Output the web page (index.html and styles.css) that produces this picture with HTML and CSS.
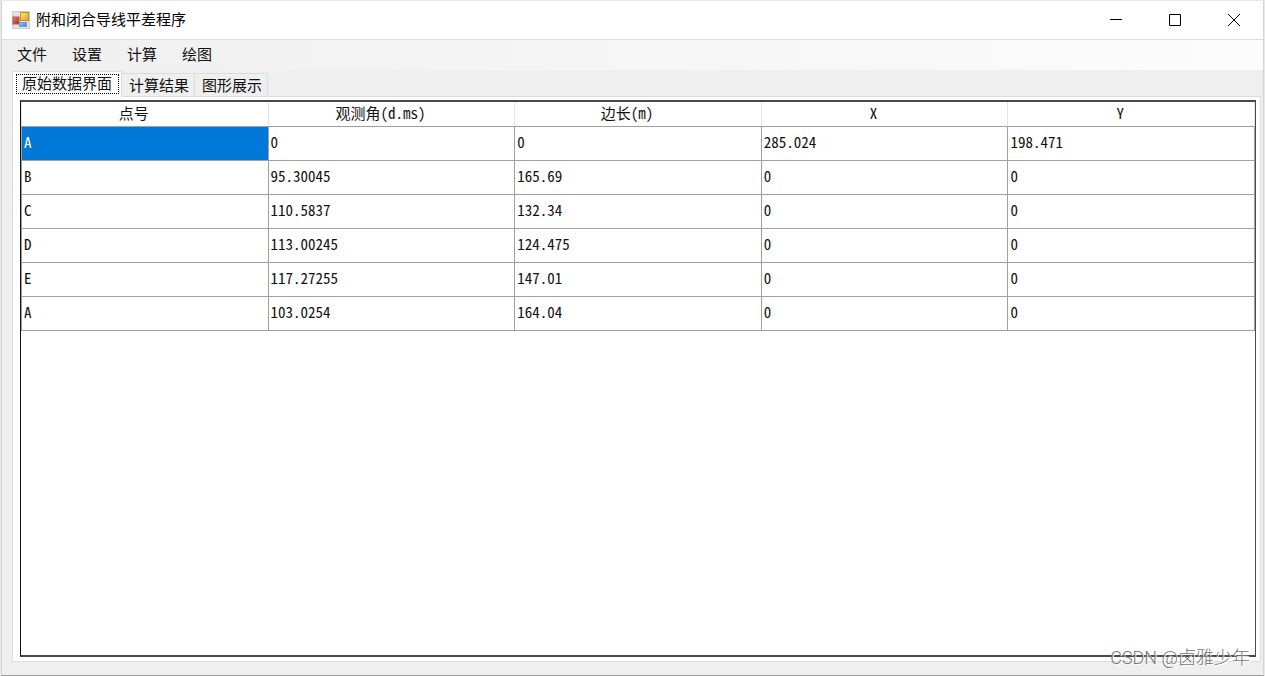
FILE: index.html
```html
<!DOCTYPE html>
<html lang="zh-CN">
<head>
<meta charset="utf-8">
<title>附和闭合导线平差程序</title>
<link rel="stylesheet" href="styles.css">
</head>
<body>
<div class="window">
  <header class="titlebar">
    <svg class="app-icon" width="18" height="18" viewBox="0 0 18 18" aria-hidden="true">
      <defs>
        <linearGradient id="gold" x2="1" y2="1"><stop stop-color="#ffe793"/><stop offset="1" stop-color="#e2a400"/></linearGradient>
        <linearGradient id="red" x2="1" y2="1"><stop stop-color="#e08a80"/><stop offset="1" stop-color="#b01c12"/></linearGradient>
        <linearGradient id="blue" x2="1" y2="1"><stop stop-color="#a8ccff"/><stop offset="1" stop-color="#3a78d8"/></linearGradient>
      </defs>
      <rect x=".5" y=".5" width="17" height="17" fill="#e4e2de" stroke="#cfccc8"/>
      <rect x="1" y="6" width="6" height="7" fill="url(#red)" stroke="#b3564e"/>
      <rect x="8.500" y="1.500" width="8" height="8" fill="url(#gold)" stroke="#c09020"/>
      <rect x="7.500" y="11.500" width="7" height="4" fill="url(#blue)" stroke="#6d9be0"/>
    </svg>
    <h1 class="title">附和闭合导线平差程序</h1>
    <div class="controls">
      <button class="control" type="button" aria-label="最小化"><svg width="12" height="12" viewBox="0 0 12 12"><path d="M0 5.500H12"/></svg></button>
      <button class="control" type="button" aria-label="最大化"><svg width="12" height="12" viewBox="0 0 12 12"><path d="M.5 .5H11.500V11.500H.5Z"/></svg></button>
      <button class="control" type="button" aria-label="关闭"><svg width="12" height="12" viewBox="0 0 12 12"><path d="M0 0L12 12M12 0L0 12"/></svg></button>
    </div>
  </header>
  <nav class="menu">
    <button class="menu-item" type="button">文件</button>
    <button class="menu-item" type="button">设置</button>
    <button class="menu-item" type="button">计算</button>
    <button class="menu-item" type="button">绘图</button>
  </nav>
  <main class="content">
    <div class="tabs" role="tablist">
      <button class="tab tab-active" type="button" role="tab" aria-selected="true"><span class="focus">原始数据界面</span></button>
      <button class="tab" type="button" role="tab" aria-selected="false">计算结果</button>
      <button class="tab" type="button" role="tab" aria-selected="false">图形展示</button>
    </div>
    <section class="page" role="tabpanel">
      <div class="grid">
        <table class="data">
          <thead>
            <tr><th>点号</th><th>观测角(d.ms)</th><th>边长(m)</th><th>X</th><th>Y</th></tr>
          </thead>
          <tbody>
            <tr><td class="selected">A</td><td>0</td><td>0</td><td>285.024</td><td>198.471</td></tr>
            <tr><td>B</td><td>95.30045</td><td>165.69</td><td>0</td><td>0</td></tr>
            <tr><td>C</td><td>110.5837</td><td>132.34</td><td>0</td><td>0</td></tr>
            <tr><td>D</td><td>113.00245</td><td>124.475</td><td>0</td><td>0</td></tr>
            <tr><td>E</td><td>117.27255</td><td>147.01</td><td>0</td><td>0</td></tr>
            <tr><td>A</td><td>103.0254</td><td>164.04</td><td>0</td><td>0</td></tr>
          </tbody>
        </table>
      </div>
    </section>
  </main>
  <div class="watermark">CSDN @卤雅少年</div>
</div>
</body>
</html>
```
FILE: styles.css
```css
* { box-sizing: border-box; }
body {
  margin: 0;
  padding: 1px 1px 0;
  height: 100vh;
  background: #e8e8e8;
  font-family: "Noto Sans CJK SC", sans-serif;
  font-size: 15px;
  color: #111;
}
button {
  margin: 0;
  padding: 0;
  border: 0;
  background: none;
  font: inherit;
  color: inherit;
}
.window {
  position: relative;
  display: flex;
  flex-direction: column;
  height: 100%;
  background: #efefef;
  border: 1px solid #d4d4d4;
  border-top: 0;
  border-bottom-color: #9c9c9c;
}
.titlebar {
  display: flex;
  align-items: center;
  height: 39px;
  padding-left: 10px;
  background: #fff;
  border-bottom: 1px solid #dadada;
}
.title {
  flex: 1;
  margin: 0 0 0 6px;
  padding-bottom: 2px;
  font-size: 15px;
  font-weight: 400;
  line-height: 20px;
  color: #000;
}
.controls { display: flex; height: 100%; }
.control {
  display: flex;
  align-items: center;
  justify-content: center;
  width: 59px;
}
.control svg { fill: none; stroke: #000; }
.menu {
  display: flex;
  gap: 25px;
  height: 30px;
  padding: 0 0 4px 15px;
  background: linear-gradient(to right, #efefef, #fcfcfc);
}
.menu-item { font-size: 15px; }
.content {
  flex: 1;
  display: flex;
  flex-direction: column;
  min-height: 0;
  padding: 1px 2px 13px 10px;
}
.tabs { display: flex; align-items: flex-end; }
.tab {
  height: 23px;
  padding: 0 5px 0 7px;
  border: 1px solid #dcdcdc;
  border-left: 0;
  border-bottom: 0;
  line-height: 20px;
}
.tab-active {
  position: relative;
  height: 26px;
  margin-bottom: -1px;
  padding: 2px 2px 3px 3px;
  border-left: 1px solid #dcdcdc;
  background: #fff;
}
.focus {
  display: block;
  height: 20px;
  padding: 0 6px 0 5px;
  border: 1px dotted #000;
  line-height: 15px;
}
.page {
  flex: 1;
  min-height: 0;
  padding: 3px 4px 4px 7px;
  background: #fff;
  border: 1px solid #dcdcdc;
}
.grid {
  height: 100%;
  border: 2px solid #4a4a4a;
  border-left: 1px solid #111;
  border-right-width: 1px;
}
.data {
  width: 100%;
  table-layout: fixed;
  border-collapse: collapse;
  font-family: "Noto Sans Mono CJK SC", "Liberation Mono", "Noto Sans CJK SC", monospace;
  font-size: 15px;
  line-height: 18px;
}
.data th {
  height: 24px;
  padding: 0 22px 2px 0;
  border: 1px solid #e4e4e4;
  border-top: 0;
  border-bottom-color: #a0a0a0;
  font-weight: 400;
}
.data td {
  height: 34px;
  padding: 0 2px 2px;
  border: 1px solid #a0a0a0;
}
.data .selected { background: #0078d7; color: #fff; }
.watermark {
  position: absolute;
  right: 13px;
  bottom: 5px;
  font-family: Roboto, "Noto Sans CJK SC", sans-serif;
  font-size: 18px;
  font-weight: 300;
  line-height: 24px;
  color: #777;
  text-shadow: 1px 1px 0 #fff;
}
```
